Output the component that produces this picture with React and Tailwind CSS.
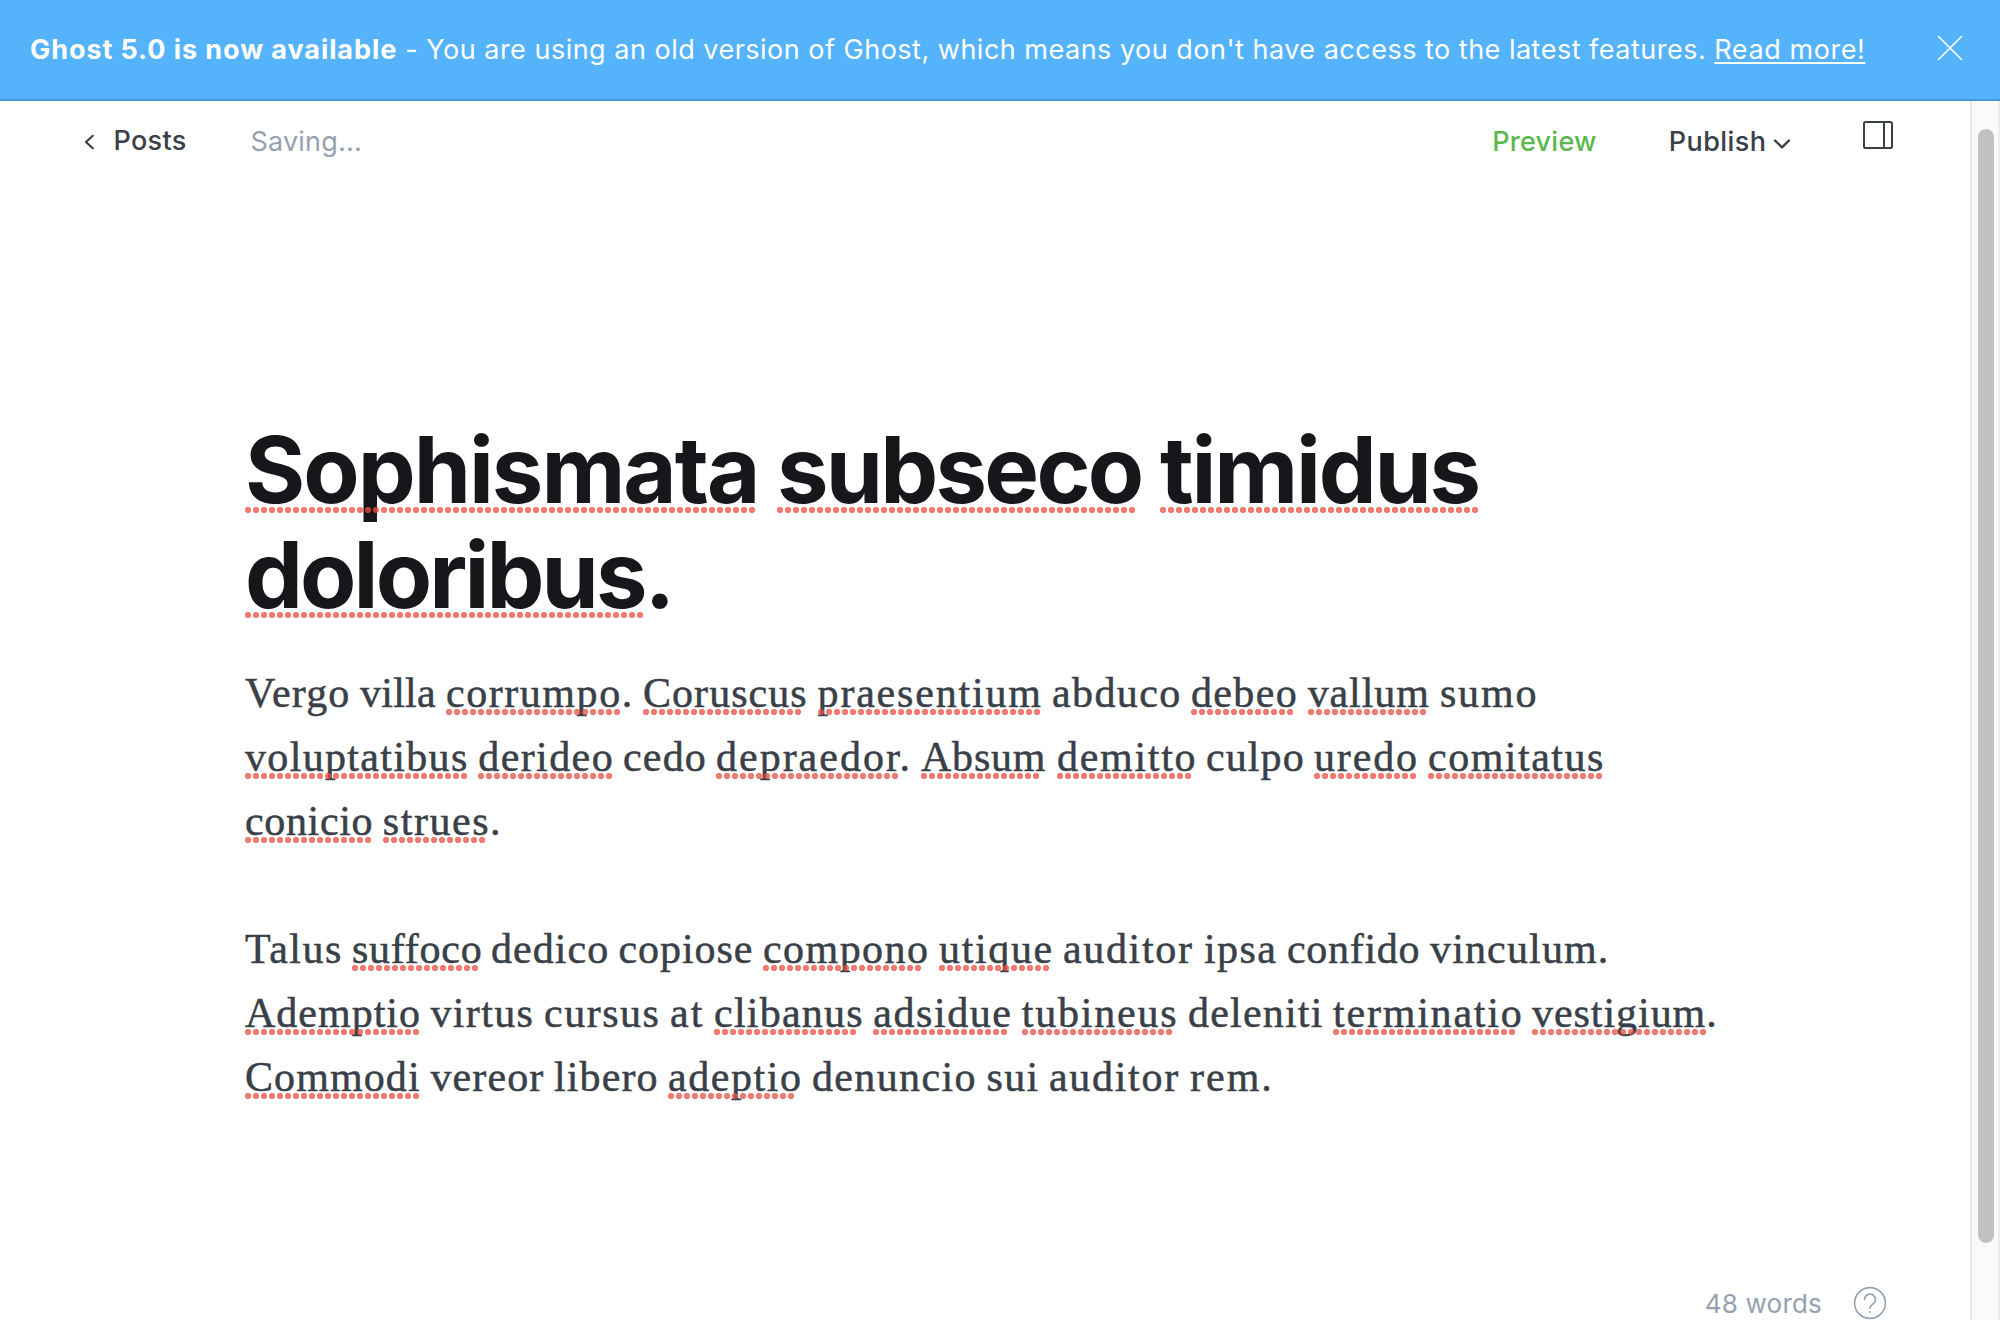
import React from "react";

// Each word: [text, advance to the next word, letter spacing, dots in its spelling mark]
const titleLines = [
  [["Sophismata", 532, -2, 64], ["subseco", 383, -2.75, 45], ["timidus", 320, -2.2, 40]],
  [["doloribus.", 430, -2.9, 50]],
];

const paragraphs = [
  [
    [["Vergo", 115, 1.2], ["villa", 86, 0.25], ["corrumpo.", 197, 1.55, 22], ["Coruscus", 174.6, 1.05, 20], ["praesentium", 234.4, 1.8, 28], ["abduco", 139, 1.4], ["debeo", 116.7, 1.35, 13], ["vallum", 132.3, 0.9, 15], ["sumo", 97, 1.8]],
    [["voluptatibus", 233.3, 1.33, 28], ["derideo", 144.7, 1.4, 17], ["cedo", 93, 1.2], ["depraedor.", 205, 2, 23], ["Absum", 136, 0.8, 15], ["demitto", 149, 1.7, 17], ["culpo", 108, 1.1], ["uredo", 114, 1.85, 13], ["comitatus", 176, 1.5, 22]],
    [["conicio", 137.8, 0.65, 16], ["strues.", 118, 1.55, 13]],
  ],
  [
    [["Talus", 107, 1.5], ["suffoco", 139, 0.75, 16], ["dedico", 127.5, 1.05], ["copiose", 144.5, 0.95], ["compono", 176, 1.45, 20], ["utique", 124, 1.65, 14], ["auditor", 141, 1.65], ["ipsa", 83, 1.4], ["confido", 143, 0.7], ["vinculum.", 179, 1.15]],
    [["Ademptio", 185.5, 1, 22], ["virtus", 113.5, 1.35], ["cursus", 126, 1.5], ["at", 44, 2], ["clibanus", 159.3, 1.25, 18], ["adsidue", 148.4, 1.55, 17], ["tubineus", 166.3, 1.8, 19], ["deleniti", 145, 1.2], ["terminatio", 199, 1.8, 23], ["vestigium.", 185, 0.95, 22]],
    [["Commodi", 185.5, 1.1, 22], ["vereor", 123.5, 1.1], ["libero", 114, 1.1], ["adeptio", 144, 1.55, 16], ["denuncio", 174.5, 1.35], ["sui", 62.5, 1.3], ["auditor", 141, 1.7], ["rem.", 83, 2]],
  ],
];

function Line({ words, className, markClass }) {
  return (
    <span className={"flex whitespace-pre " + className}>
      {words.map(([text, width, tracking, dots], i) => (
        <span key={i} className="relative shrink-0" style={{ width, letterSpacing: tracking }}>
          {text + " "}
          {dots && (
            <span
              className={"absolute left-0 h-1.5 bg-[radial-gradient(circle_at_3px_3px,rgba(238,76,62,0.75)_2.8px,transparent_3.5px)] bg-[length:8px_6px] bg-repeat-x " + markClass}
              style={{ width: dots * 8 - 1 }}
            />
          )}
        </span>
      ))}
    </span>
  );
}

function Banner() {
  return (
    <div className="flex h-[101px] shrink-0 items-start justify-between border-b-2 border-[#429ade] bg-[#54b3fa] pr-[37px] pl-[30px] text-[27px] text-white">
      <p className="mt-[32px] leading-[36px] whitespace-pre">
        <b className="font-bold tracking-[0.92px]">Ghost 5.0 is now available</b>
        <span className="tracking-[0.495px]"> - You are using an old version of Ghost, which means you don't have access to the latest features. </span>
        <a href="#" className="tracking-[0.57px] underline decoration-2 underline-offset-[3px] [text-decoration-skip-ink:none]">Read more!</a>
      </p>
      <button type="button" aria-label="Close" className="mt-[35px]">
        <svg className="size-[26px]" viewBox="0 0 26 26" fill="none" stroke="currentColor" strokeWidth="1.6" strokeLinecap="round">
          <path d="M1.5 1.5l23 23M24.5 1.5l-23 23" />
        </svg>
      </button>
    </div>
  );
}

function Header() {
  return (
    <header className="flex h-[80px] shrink-0 items-start justify-between pr-[77px] pl-[84px] text-[27px] leading-[36px] text-[#394047]">
      <div className="flex items-start">
        <a href="#" className="mt-[22px] flex font-medium tracking-[0.3px]">
          <svg className="mt-[11px] mr-[18.5px] h-4 w-[11px]" viewBox="0 0 11 16" fill="none" stroke="currentColor" strokeWidth="2.2" strokeLinecap="round" strokeLinejoin="round">
            <path d="M8.800 1.800L2 8l6.800 6.200" />
          </svg>
          Posts
        </a>
        <span className="mt-[23px] ml-[64px] tracking-[0.2px] text-[#95a1b1]">Saving...</span>
      </div>
      <div className="flex items-start">
        <button type="button" className="mt-[23px] font-medium tracking-[0.25px] text-[#5bb84c]">Preview</button>
        <button type="button" className="mt-[23px] ml-[72px] flex font-medium tracking-[0.45px]">
          Publish
          <svg className="mt-[14px] ml-[6.500px] h-[12px] w-[18px]" viewBox="0 0 18 12" fill="none" stroke="currentColor" strokeWidth="2.4" strokeLinecap="round" strokeLinejoin="round">
            <path d="M2 2.500l7 6.800 7-6.800" />
          </svg>
        </button>
        <button type="button" aria-label="Settings" className="mt-[19px] ml-[72px]">
          <svg className="h-[30px] w-[30px]" viewBox="0 0 30 30" fill="none" stroke="currentColor" strokeWidth="2">
            <rect x="1" y="2" width="28" height="26" rx="1.6" />
            <path d="M21 2v26" />
          </svg>
        </button>
      </div>
    </header>
  );
}

export default function App() {
  return (
    <div className="flex h-[1320px] w-[2000px] flex-col overflow-hidden bg-white font-['Inter',sans-serif]">
      <Banner />
      <div className="flex min-h-0 flex-1">
        <div className="flex min-w-0 flex-1 flex-col">
          <Header />
          <main className="flex-1 pt-[236px] pl-[245px]">
            <h1 className="text-[92px] leading-[105px] font-bold text-[#15171a]">
              {titleLines.map((words, i) => (
                <Line key={i} words={words} className="h-[105px]" markClass="top-[90px]" />
              ))}
            </h1>
            <div className="mt-[34px] flex flex-col gap-16 font-['Liberation_Serif',serif] text-[42px] leading-[64px] text-[#394047] [-webkit-text-stroke:0.5px_#394047]">
              {paragraphs.map((lines, i) => (
                <p key={i}>
                  {lines.map((words, j) => (
                    <Line key={j} words={words} className="h-16" markClass="top-[48px]" />
                  ))}
                </p>
              ))}
            </div>
          </main>
          <footer className="flex h-[37px] shrink-0 items-start justify-end pr-[83px] text-[26px] leading-[36px] text-[#95a1b1]">
            <span className="mt-[3px] tracking-[0.2px]">48 words</span>
            <svg className="mt-[3px] ml-[31px] size-[34px]" viewBox="0 0 34 34" fill="none" stroke="currentColor" strokeWidth="1.6" strokeLinecap="round" strokeLinejoin="round">
              <circle cx="17" cy="17" r="15.4" />
              <path d="M11.6 13.4a5.400 5.400 0 1 1 8.300 4.600c-1.800 1.200-2.900 1.900-2.900 4.200" />
              <circle cx="17" cy="26" r="1" fill="currentColor" stroke="none" />
            </svg>
          </footer>
        </div>
        <div className="w-[30px] shrink-0 border-r-2 border-l-2 border-r-[#ececec] border-l-[#e7e7e7] bg-[#fafafa] pt-7 pl-1.5">
          <div className="h-[1114px] w-4 rounded-full bg-[#c1c1c1]" />
        </div>
      </div>
    </div>
  );
}
